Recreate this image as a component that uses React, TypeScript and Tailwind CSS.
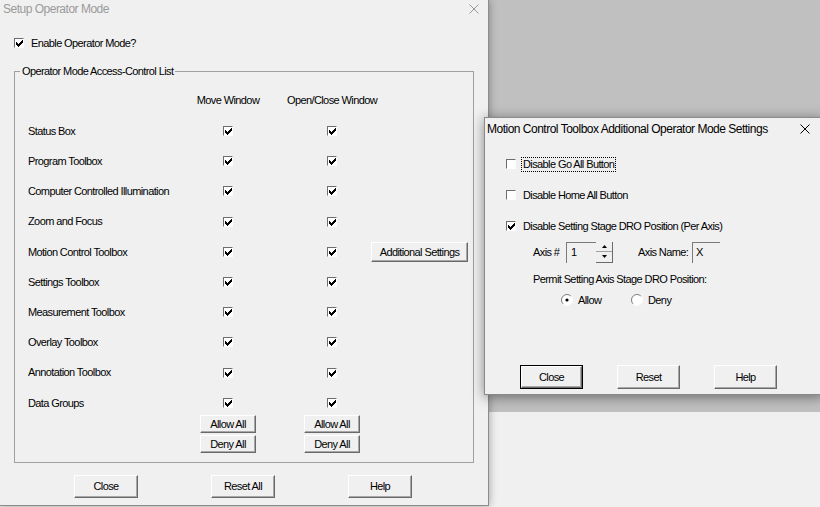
import React from 'react'

const rows = [
  'Status Box',
  'Program Toolbox',
  'Computer Controlled Illumination',
  'Zoom and Focus',
  'Motion Control Toolbox',
  'Settings Toolbox',
  'Measurement Toolbox',
  'Overlay Toolbox',
  'Annotation Toolbox',
  'Data Groups',
]

function Check({ checked }: { checked?: boolean }) {
  return (
    <span className="relative inline-block w-[10px] h-[10px] shrink-0 border-t border-l border-r border-b border-t-[#6d6d6d] border-l-[#6d6d6d] border-r-white border-b-white bg-white">
      {checked && (
        <svg className="absolute left-[1px] top-[1px]" width="7" height="7" viewBox="0 0 7 7" shapeRendering="crispEdges">
          {[2, 3, 4, 3, 2, 1, 0].map((y, x) => (
            <rect key={x} x={x} y={y} width="1" height="3" fill="#000" />
          ))}
        </svg>
      )}
    </span>
  )
}

function Radio({ checked }: { checked?: boolean }) {
  return (
    <svg width="12" height="12" viewBox="0 0 12 12" className="shrink-0">
      <circle cx="6" cy="6" r="5" fill="#fff" />
      <path d="M9.9 2.1 A5.5 5.5 0 0 0 2.1 9.9" stroke="#808080" strokeWidth="1" fill="none" />
      <path d="M9.9 2.1 A5.5 5.5 0 0 1 2.1 9.9" stroke="#fff" strokeWidth="1" fill="none" />
      {checked && <circle cx="6" cy="6" r="1.6" fill="#000" />}
    </svg>
  )
}

function Btn({ children, className = '' }: { children: React.ReactNode; className?: string }) {
  return (
    <div
      className={`flex items-center justify-center bg-[#f0f0f0] border-t border-l border-r border-b border-t-white border-l-white border-r-[#696969] border-b-[#696969] shadow-[inset_-1px_-1px_0_#a8a8a8] ${className}`}
    >
      {children}
    </div>
  )
}

function CloseX({ color }: { color: string }) {
  return (
    <svg width="10" height="10" viewBox="0 0 10 10">
      <path d="M0.5 0.5 L9.5 9.5 M9.5 0.5 L0.5 9.5" stroke={color} strokeWidth="1" />
    </svg>
  )
}

export default function App() {
  return (
    <div className="relative w-[820px] h-[507px] overflow-hidden bg-[#f0f0f0] text-black text-[11px] tracking-[-0.6px] font-['Liberation_Sans',Arial,sans-serif]">
      {/* window behind */}
      <div className="absolute left-[488px] top-0 w-[332px] h-[412px] bg-[#c0c0c0]" />

      {/* Setup Operator Mode */}
      <div className="absolute left-0 top-0 w-[489px] h-[506px] flex flex-col bg-[#f0f0f0] border-r border-b border-[#8c8c8c] shadow-[0_0_8px_rgba(0,0,0,0.35)]">
        <div className="h-[18px] flex items-center justify-between pl-[3px] pr-[9px] text-[12px] tracking-[-0.5px] text-[#9a9a9a]">
          <span>Setup Operator Mode</span>
          <CloseX color="#9a9a9a" />
        </div>

        <div className="mt-[18px] h-[14px] flex items-center pl-[14px] gap-[7px]">
          <Check checked />
          <span>Enable Operator Mode?</span>
        </div>

        <div className="relative mt-[21px] ml-[14px] w-[460px] h-[392px] border border-[#a0a0a0]">
          <span className="absolute left-[5px] top-[-8px] px-[2px] leading-[14px] bg-[#f0f0f0]">
            Operator Mode Access-Control List
          </span>

          <div className="mt-[21px] h-[14px] flex items-center pl-[13px] whitespace-nowrap">
            <span className="w-[162px]" />
            <span className="w-[76px] flex justify-center">Move Window</span>
            <span className="w-[28px]" />
            <span className="w-[76px] flex justify-center">Open/Close Window</span>
          </div>

          <div className="mt-[9px] flex flex-col">
            {rows.map((r) => (
              <div key={r} className="h-[30.2px] flex items-center pl-[13px] whitespace-nowrap">
                <span className="w-[162px]">{r}</span>
                <span className="w-[76px] flex justify-center">
                  <Check checked />
                </span>
                <span className="w-[28px]" />
                <span className="w-[76px] flex justify-center">
                  <Check checked />
                </span>
                {r === 'Motion Control Toolbox' && (
                  <Btn className="ml-[1px] w-[97px] h-[20px]">Additional Settings</Btn>
                )}
              </div>
            ))}
          </div>

          <div className="-mt-[3px] flex pl-[13px]">
            <span className="w-[162px]" />
            <div className="w-[76px] flex flex-col items-center gap-[2px]">
              <Btn className="w-[56px] h-[18px]">Allow All</Btn>
              <Btn className="w-[56px] h-[18px]">Deny All</Btn>
            </div>
            <span className="w-[28px]" />
            <div className="w-[76px] flex flex-col items-center gap-[2px]">
              <Btn className="w-[56px] h-[18px]">Allow All</Btn>
              <Btn className="w-[56px] h-[18px]">Deny All</Btn>
            </div>
          </div>
        </div>

        <div className="mt-[12px] flex pl-[74px] gap-[73px]">
          <Btn className="w-[64px] h-[23px]">Close</Btn>
          <Btn className="w-[64px] h-[23px]">Reset All</Btn>
          <Btn className="w-[64px] h-[23px]">Help</Btn>
        </div>
      </div>

      {/* Motion Control Toolbox Additional Operator Mode Settings */}
      <div className="absolute left-[484px] top-[117px] w-[340px] h-[278px] flex flex-col bg-[#f0f0f0] border border-[#8a8a8a] shadow-[0_2px_12px_rgba(0,0,0,0.45)]">
        <div className="h-[22px] flex items-center pl-[2px] pr-[13px] text-[12px] tracking-[-0.5px] whitespace-nowrap">
          <span className="flex-1">Motion Control Toolbox Additional Operator Mode Settings</span>
          <CloseX color="#000" />
        </div>

        <div className="mt-[17px] flex flex-col gap-[17px] pl-[21px]">
          <div className="h-[14px] flex items-center gap-[5px]">
            <Check />
            <span className="px-[1px] leading-[13px] border border-dotted border-black">Disable Go All Button</span>
          </div>
          <div className="h-[14px] flex items-center gap-[7px]">
            <Check />
            <span>Disable Home All Button</span>
          </div>
          <div className="h-[14px] flex items-center gap-[7px]">
            <Check checked />
            <span>Disable Setting Stage DRO Position (Per Axis)</span>
          </div>
        </div>

        <div className="mt-[8px] h-[22px] flex items-center pl-[48px] whitespace-nowrap">
          <span className="w-[33px]">Axis #</span>
          <div className="w-[30px] h-[21px] flex items-center pl-[4px] bg-[#f0f0f0] border-t border-l border-t-[#7a7a7a] border-l-[#7a7a7a]">1</div>
          <div className="w-[17px] h-[21px] flex flex-col border-r border-b border-[#6a6a6a]">
            <div className="flex-1 flex items-center justify-center border-b border-[#a0a0a0]">
              <svg width="5" height="3" viewBox="0 0 5 3"><path d="M2.5 0 L5 3 L0 3 Z" fill="#000" /></svg>
            </div>
            <div className="flex-1 flex items-center justify-center">
              <svg width="5" height="3" viewBox="0 0 5 3"><path d="M0 0 L5 0 L2.5 3 Z" fill="#000" /></svg>
            </div>
          </div>
          <span className="ml-[25px] w-[54px]">Axis Name:</span>
          <div className="w-[28px] h-[21px] flex items-center pl-[3px] bg-[#f0f0f0] border-t border-l border-t-[#7a7a7a] border-l-[#7a7a7a]">X</div>
        </div>

        <div className="mt-[9px] h-[14px] flex items-center pl-[48px]">Permit Setting Axis Stage DRO Position:</div>

        <div className="mt-[7px] h-[14px] flex items-center pl-[76px]">
          <div className="w-[70px] flex items-center gap-[5px]">
            <Radio checked />
            <span>Allow</span>
          </div>
          <div className="flex items-center gap-[5px]">
            <Radio />
            <span>Deny</span>
          </div>
        </div>

        <div className="mt-[58px] flex pl-[35px] gap-[34px]">
          <div className="w-[63px] h-[24px] border border-black">
            <Btn className="w-full h-full">Close</Btn>
          </div>
          <Btn className="w-[63px] h-[24px]">Reset</Btn>
          <Btn className="w-[63px] h-[24px]">Help</Btn>
        </div>
      </div>
    </div>
  )
}
